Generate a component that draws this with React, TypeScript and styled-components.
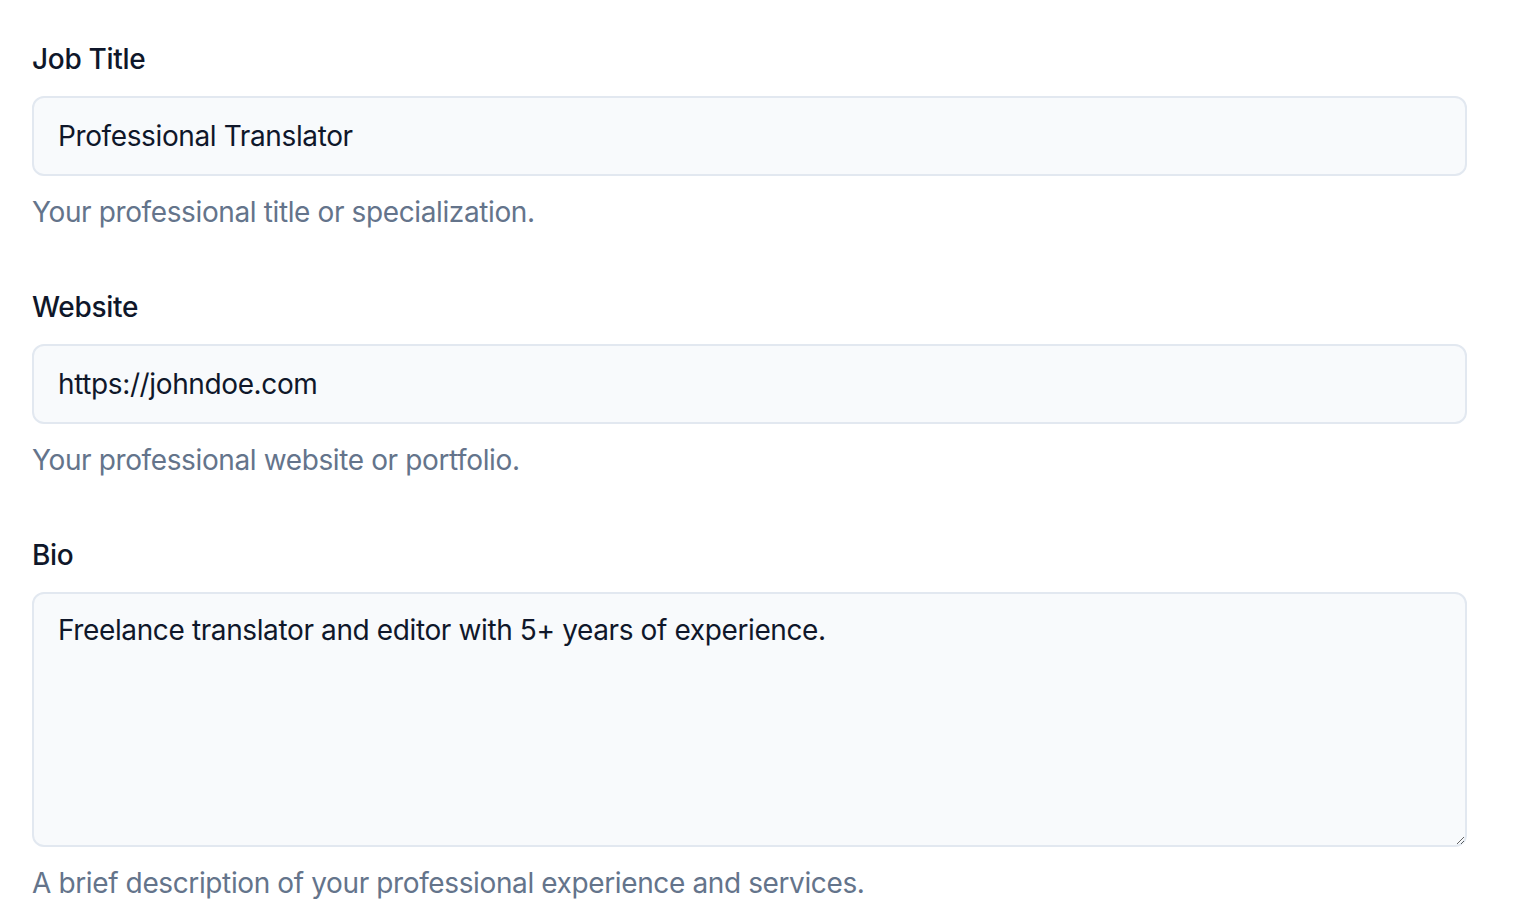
import React from "react";
import styled, { createGlobalStyle } from "styled-components";

const GlobalStyle = createGlobalStyle`
  * { box-sizing: border-box; }
  html, body { margin: 0; padding: 0; background: #ffffff; }
  body { font-family: Inter, "Noto Sans", "Liberation Sans", sans-serif; color: #0f172a; }
`;

const Form = styled.form`
  display: flex;
  flex-direction: column;
  gap: 61px;
  padding: 45px 47px 0 32px;
  width: 1514px;
`;

const Field = styled.div`
  display: flex;
  flex-direction: column;
`;

const Label = styled.label`
  font-size: 28px;
  font-weight: 500;
  line-height: 28px;
  letter-spacing: -0.3px;
  color: #0f172a;
  margin-bottom: 23px;
`;

const baseControl = `
  width: 100%;
  border: 2px solid #e2e8f0;
  border-radius: 12px;
  background: #f8fafc;
  font-family: Inter, "Noto Sans", "Liberation Sans", sans-serif;
  font-size: 28px;
  line-height: 40px;
  letter-spacing: -0.38px;
  color: #0f172a;
  padding: 0 24px;
  outline: none;
`;

const Input = styled.input`
  ${baseControl}
  height: 80px;
`;

const TextArea = styled.textarea`
  ${baseControl}
  height: 255px;
  padding-top: 16px;
  padding-bottom: 16px;
  resize: vertical;
  display: block;
`;

const Description = styled.p`
  margin: 16px 0 0;
  font-size: 28px;
  line-height: 40px;
  letter-spacing: -0.38px;
  color: #64748b;
`;

export default function App() {
  return (
    <>
      <GlobalStyle />
      <Form onSubmit={(e) => e.preventDefault()}>
        <Field>
          <Label htmlFor="job">Job Title</Label>
          <Input id="job" defaultValue="Professional Translator" />
          <Description>Your professional title or specialization.</Description>
        </Field>
        <Field>
          <Label htmlFor="web">Website</Label>
          <Input id="web" defaultValue="https://johndoe.com" />
          <Description>Your professional website or portfolio.</Description>
        </Field>
        <Field>
          <Label htmlFor="bio">Bio</Label>
          <TextArea
            id="bio"
            defaultValue="Freelance translator and editor with 5+ years of experience."
          />
          <Description>A brief description of your professional experience and services.</Description>
        </Field>
      </Form>
    </>
  );
}
